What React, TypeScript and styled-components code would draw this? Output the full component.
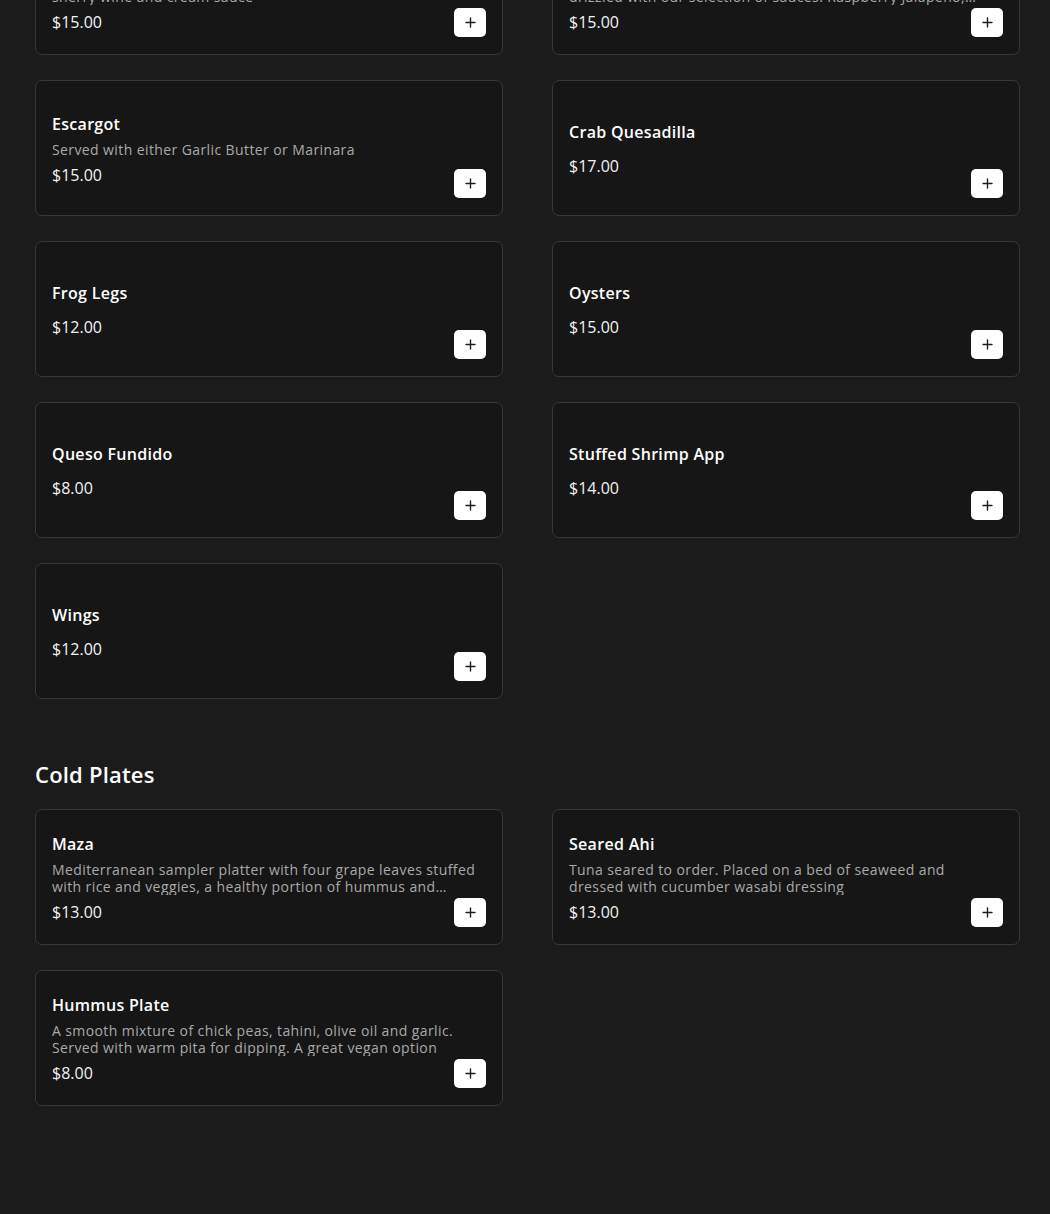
import React from 'react'
import styled, {createGlobalStyle} from 'styled-components'

interface IMenuItem {
    id: number;
    name: string;
    description?: string;
    price: number;
}

interface ISection {
    title?: string;
    items: Array<IMenuItem>;
}

const GlobalStyle = createGlobalStyle`
  html, body {
    margin: 0;
    padding: 0;
    background: #1b1b1b;
  }
  body {
    font-family: "Open Sans", "Liberation Sans", sans-serif;
    color: #ffffff;
    overflow: hidden;
  }
`;

const Page = styled.div`
  padding: 0 30px 0 35px;
  min-height: 1214px;
  box-sizing: border-box;
  background: #1b1b1b;
`;

// the screenshot is taken part way down the menu, so the first block is pulled up
const Section = styled.section<{ $scrolled?: boolean }>`
  margin-top: ${p => (p.$scrolled ? '-81px' : '61px')};
`;

const SectionTitle = styled.h2`
  margin: 0 0 21px 0;
  font-family: "Open Sans", "Liberation Sans", sans-serif;
  font-size: 22px;
  line-height: 28px;
  font-weight: 600;
  letter-spacing: 0.2px;
  color: #ffffff;
`;

const Grid = styled.div`
  display: grid;
  grid-template-columns: 468px 468px;
  column-gap: 49px;
  row-gap: 25px;
`;

const Card = styled.div`
  position: relative;
  height: 136px;
  box-sizing: border-box;
  padding: 17px 16px 15px 16px;
  display: flex;
  flex-direction: column;
  justify-content: center;
  background: #161616;
  border: 1px solid #373737;
  border-radius: 7px;
`;

const ItemName = styled.div`
  font-size: 16px;
  line-height: 24px;
  font-weight: 600;
  letter-spacing: 0.3px;
  color: #ffffff;
`;

const ItemDesc = styled.div`
  margin: 5px 0 5px 0;
  font-size: 14px;
  line-height: 17px;
  letter-spacing: 0.4px;
  color: #a9a9a9;
  white-space: pre-line;
  display: -webkit-box;
  -webkit-line-clamp: 2;
  -webkit-box-orient: vertical;
  overflow: hidden;
`;

const Price = styled.div`
  font-size: 16px;
  line-height: 24px;
  color: #f2f2f2;
`;

const AddButton = styled.button`
  position: absolute;
  right: 16px;
  bottom: 17px;
  width: 32px;
  height: 29px;
  padding: 0;
  border: none;
  border-radius: 5px;
  background: #ffffff;
  display: flex;
  align-items: center;
  justify-content: center;
  cursor: pointer;
`;

const PlusIcon = () => (
    <svg width="11" height="11" viewBox="0 0 11 11">
        <path d="M5.5 1v9M1 5.5h9" stroke="#1e1e1e" strokeWidth="1.4" strokeLinecap="round"/>
    </svg>
);

const sections: Array<ISection> = [
    {
        items: [
            {id: 1, name: 'Stuffed Mushrooms', description: 'Mushroom caps filled with crab stuffing, baked in a\nsherry wine and cream sauce', price: 15},
            {id: 2, name: 'Coconut Shrimp', description: 'Jumbo shrimp rolled in coconut, fried golden and\ndrizzled with our selection of sauces: Raspberry Jalapeño, Mango Habanero or Sweet Chili', price: 15},
            {id: 3, name: 'Escargot', description: 'Served with either Garlic Butter or Marinara', price: 15},
            {id: 4, name: 'Crab Quesadilla', price: 17},
            {id: 5, name: 'Frog Legs', price: 12},
            {id: 6, name: 'Oysters', price: 15},
            {id: 7, name: 'Queso Fundido', price: 8},
            {id: 8, name: 'Stuffed Shrimp App', price: 14},
            {id: 9, name: 'Wings', price: 12},
        ]
    },
    {
        title: 'Cold Plates',
        items: [
            {id: 10, name: 'Maza', description: 'Mediterranean sampler platter with four grape leaves stuffed with rice and veggies, a healthy portion of hummus and tabouli, served with pita', price: 13},
            {id: 11, name: 'Seared Ahi', description: 'Tuna seared to order. Placed on a bed of seaweed and dressed with cucumber wasabi dressing', price: 13},
            {id: 12, name: 'Hummus Plate', description: 'A smooth mixture of chick peas, tahini, olive oil and garlic. Served with warm pita for dipping. A great vegan option', price: 8},
        ]
    }
];

const MenuCard: React.FunctionComponent<{ item: IMenuItem }> = ({item}) => (
    <Card>
        <ItemName>{item.name}</ItemName>
        <ItemDesc>{item.description}</ItemDesc>
        <Price>${item.price.toFixed(2)}</Price>
        <AddButton aria-label={'Add ' + item.name}><PlusIcon/></AddButton>
    </Card>
);

const App = () => {
    return (
        <>
            <GlobalStyle/>
            <Page>
                {sections.map((section, i) => (
                    <Section key={i} $scrolled={i === 0}>
                        {section.title && <SectionTitle>{section.title}</SectionTitle>}
                        <Grid>
                            {section.items.map(item => <MenuCard key={item.id} item={item}/>)}
                        </Grid>
                    </Section>
                ))}
            </Page>
        </>
    )
}

export default App;
